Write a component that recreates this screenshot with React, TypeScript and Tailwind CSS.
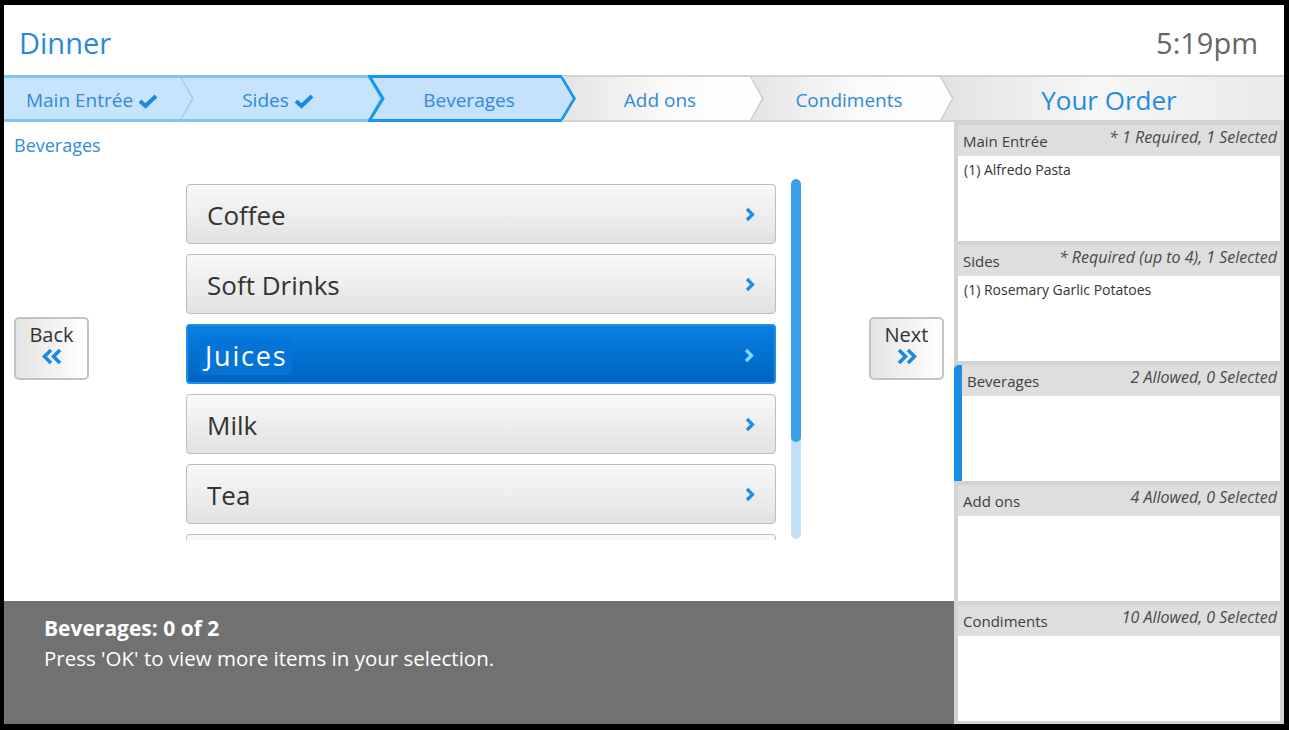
import React from "react";

const FONT = { fontFamily: '"Open Sans", "Noto Sans", Arial, sans-serif' };

type StepState = "done" | "active" | "todo" | "order";

function StepBg({ w, h, state, first, last, id }: { w: number; h: number; state: StepState; first?: boolean; last?: boolean; id: string }) {
  const d = 14;
  const pts: string[] = [];
  pts.push(`0,0`);
  if (last) {
    pts.push(`${w},0`, `${w},${h}`);
  } else {
    pts.push(`${w - d},0`, `${w},${h / 2}`, `${w - d},${h}`);
  }
  pts.push(`0,${h}`);
  if (!first) pts.push(`${d},${h / 2}`);
  const poly = pts.join(" ");

  const activePts = (() => {
    const s = 1.5;
    const p: string[] = [];
    p.push(`${s},${s}`, `${w - d - 0.5},${s}`, `${w - s},${h / 2}`, `${w - d - 0.5},${h - s}`, `${s},${h - s}`, `${d + s - 0.5},${h / 2}`);
    return p.join(" ");
  })();

  let fill = "#c6e4fb";
  let line = "#86c2ef";
  let edge = "#98cdf3";
  if (state === "todo" || state === "order") {
    fill = `url(#g-${id})`;
    line = "#d3d3d3";
    edge = "#cdcdcd";
  }

  return (
    <svg className="absolute inset-0" width={w} height={h} viewBox={`0 0 ${w} ${h}`}>
      <defs>
        <linearGradient id={`g-${id}`} x1="0" y1="0" x2="1" y2="0">
          {state === "order" ? (
            <>
              <stop offset="0" stopColor="#e2e2e2" />
              <stop offset="0.45" stopColor="#f7f7f7" />
              <stop offset="1" stopColor="#e9e9e9" />
            </>
          ) : (
            <>
              <stop offset="0" stopColor="#e4e4e4" />
              <stop offset="0.55" stopColor="#fbfbfb" />
              <stop offset="1" stopColor="#ffffff" />
            </>
          )}
        </linearGradient>
      </defs>
      {state === "active" ? (
        <polygon points={activePts} fill="#c4e2fb" stroke="#1a95ea" strokeWidth={3} strokeLinejoin="miter" />
      ) : (
        <>
          <polygon points={poly} fill={fill} />
          <rect x={0} y={0} width={last ? w : w - d} height={state === "done" ? 3 : 2} fill={line} />
          <rect x={0} y={h - (state === "done" ? 3 : 2)} width={last ? w : w - d} height={state === "done" ? 3 : 2} fill={line} />
          {!last && (
            <polyline points={`${w - d},0 ${w - 1},${h / 2} ${w - d},${h}`} fill="none" stroke={edge} strokeWidth={2} />
          )}
        </>
      )}
    </svg>
  );
}

function Check() {
  return (
    <svg width="20" height="16" viewBox="0 0 20 16" className="ml-[5px] mt-[2px]">
      <path d="M2 8 L7.5 13 L18 3" fill="none" stroke="#1b89e0" strokeWidth="4" strokeLinejoin="miter" />
    </svg>
  );
}

function ChevronRight({ color = "#1c8de3" }: { color?: string }) {
  return (
    <svg width="10" height="15" viewBox="0 0 10 15">
      <path d="M2 2 L7.5 7.5 L2 13" fill="none" stroke={color} strokeWidth="3.2" strokeLinejoin="miter" />
    </svg>
  );
}

function DoubleChevron({ dir }: { dir: "left" | "right" }) {
  const d =
    dir === "left"
      ? "M11 2 L4.5 8.5 L11 15 M20 2 L13.5 8.5 L20 15"
      : "M4 2 L10.5 8.5 L4 15 M13 2 L19.5 8.5 L13 15";
  return (
    <svg width="24" height="17" viewBox="0 0 24 17">
      <path d={d} fill="none" stroke="#1b8ae2" strokeWidth="3.6" strokeLinejoin="miter" />
    </svg>
  );
}

const steps: { label: string; w: number; state: StepState; check?: boolean }[] = [
  { label: "Main Entrée", w: 190, state: "done", check: true },
  { label: "Sides", w: 202, state: "done", check: true },
  { label: "Beverages", w: 208, state: "active" },
  { label: "Add ons", w: 202, state: "todo" },
  { label: "Condiments", w: 204, state: "todo" },
  { label: "Your Order", w: 344, state: "order" },
];

function Breadcrumb() {
  const h = 47;
  return (
    <div className="flex h-[47px] w-full">
      {steps.map((s, i) => {
        const first = i === 0;
        const last = i === steps.length - 1;
        return (
          <div
            key={s.label}
            className={`relative h-[47px] shrink-0 ${last ? "" : "-mr-[14px]"}`}
            style={{ width: s.w }}
          >
            <StepBg w={s.w} h={h} state={s.state} first={first} last={last} id={`s${i}`} />
            <div className={`relative flex h-full items-center justify-center pt-[3px] ${first ? "pr-[14px]" : "pr-[6px]"}`}>
              {last ? (
                <span className="text-[26px] text-[#1e8de0]">{s.label}</span>
              ) : (
                <span className="flex items-center text-[19px] text-[#3189d8]">
                  {s.label}
                  {s.check && <Check />}
                </span>
              )}
            </div>
          </div>
        );
      })}
    </div>
  );
}

const items = ["Coffee", "Soft Drinks", "Juices", "Milk", "Tea", ""];

function ListItem({ label, selected }: { label: string; selected?: boolean }) {
  if (selected) {
    return (
      <div className="flex h-[60px] shrink-0 items-center justify-between rounded-[4px] border-2 border-[#1b8fe9] bg-gradient-to-b from-[#0a80e2] to-[#0064c2] pl-[12px] pr-[20px] pt-[3px]">
        <span className="rounded-[5px] bg-[#0673d6] px-[5px] text-[27px] leading-[38px] tracking-[1.8px] text-white">{label}</span>
        <ChevronRight color="#83dcff" />
      </div>
    );
  }
  return (
    <div className="flex h-[60px] shrink-0 items-center justify-between rounded-[4px] border border-[#bdbdbd] bg-gradient-to-b from-[#f9f9f9] to-[#e2e2e2] pl-[20px] pr-[20px]">
      <span className="pt-[2px] text-[26px] text-[#333333]">{label}</span>
      {label && <ChevronRight />}
    </div>
  );
}

function NavButton({ label, dir }: { label: string; dir: "left" | "right" }) {
  return (
    <div className="mt-[138px] flex h-[63px] w-[75px] shrink-0 flex-col items-center rounded-[5px] border-2 border-[#c3c3c3] bg-gradient-to-r from-[#e4e4e4] to-[#ffffff] pt-[3px]">
      <span className="text-[20px] leading-[26px] text-[#333333]">{label}</span>
      <DoubleChevron dir={dir} />
    </div>
  );
}

const sections = [
  { name: "Main Entrée", info: "* 1 Required, 1 Selected", body: "(1) Alfredo Pasta" },
  { name: "Sides", info: "* Required (up to 4), 1 Selected", body: "(1) Rosemary Garlic Potatoes" },
  { name: "Beverages", info: "2 Allowed, 0 Selected", body: "", active: true },
  { name: "Add ons", info: "4 Allowed, 0 Selected", body: "" },
  { name: "Condiments", info: "10 Allowed, 0 Selected", body: "" },
];

function OrderSection({ s }: { s: (typeof sections)[number] }) {
  return (
    <div className={`flex h-[116px] shrink-0 ${s.active ? "-ml-[4px]" : ""}`}>
      {s.active && <div className="w-[8px] shrink-0 rounded-tl-[5px] bg-[#1a8fe6]" />}
      <div className="flex flex-1 flex-col">
        <div className="flex h-[31px] shrink-0 justify-between bg-[#dedede] pl-[5px] pr-[3px]">
          <span className="pt-[6px] text-[15px] leading-[20px] text-[#3e3e3e]">{s.name}</span>
          <span className="pt-[2px] text-[16px] italic leading-[20px] text-[#4a4a4a]">{s.info}</span>
        </div>
        <div className="flex-1 bg-white pl-[6px] pt-[4px] text-[14px] leading-[20px] text-[#333333]">{s.body}</div>
      </div>
    </div>
  );
}

export default function App() {
  return (
    <div className="h-[730px] w-[1289px] overflow-hidden bg-black pb-[6px] pl-[4px] pr-[5px] pt-[5px]" style={FONT}>
      <div className="flex h-[719px] w-[1280px] flex-col bg-white">
        <div className="flex h-[70px] shrink-0 items-center justify-between pl-[15px] pr-[26px] pt-[6px]">
          <span className="text-[29px] text-[#2a88d8]">Dinner</span>
          <span className="text-[29px] text-[#666666]">5:19pm</span>
        </div>
        <Breadcrumb />
        <div className="flex flex-1">
          <div className="flex w-[950px] shrink-0 flex-col">
            <div className="flex flex-1 flex-col bg-white">
              <div className="h-[57px] shrink-0 pl-[10px] pt-[10px] text-[18px] leading-[26px] text-[#2f8ddd]">Beverages</div>
              <div className="flex pl-[10px]">
                <NavButton label="Back" dir="left" />
                <div className="ml-[97px] mt-[5px] flex h-[356px] w-[590px] shrink-0 flex-col gap-[10px] overflow-hidden">
                  {items.map((it, i) => (
                    <ListItem key={i} label={it} selected={it === "Juices"} />
                  ))}
                </div>
                <div className="ml-[15px] flex h-[360px] w-[10px] shrink-0 flex-col overflow-hidden rounded-full bg-[#c2e1f8]">
                  <div className="h-[263px] rounded-full bg-[#3a9fe8]" />
                </div>
                <div className="ml-[68px]">
                  <NavButton label="Next" dir="right" />
                </div>
              </div>
            </div>
            <div className="h-[123px] shrink-0 bg-[#717171] pl-[40px] pt-[12px] text-white">
              <div className="text-[21px] font-bold leading-[30px]">Beverages: 0 of 2</div>
              <div className="text-[20.5px] leading-[30px]">Press 'OK' to view more items in your selection.</div>
            </div>
          </div>
          <div className="flex flex-1 flex-col gap-[4px] bg-[#d3d3d3] px-[4px] pt-[3px]">
            {sections.map((s) => (
              <OrderSection key={s.name} s={s} />
            ))}
          </div>
        </div>
      </div>
    </div>
  );
}
